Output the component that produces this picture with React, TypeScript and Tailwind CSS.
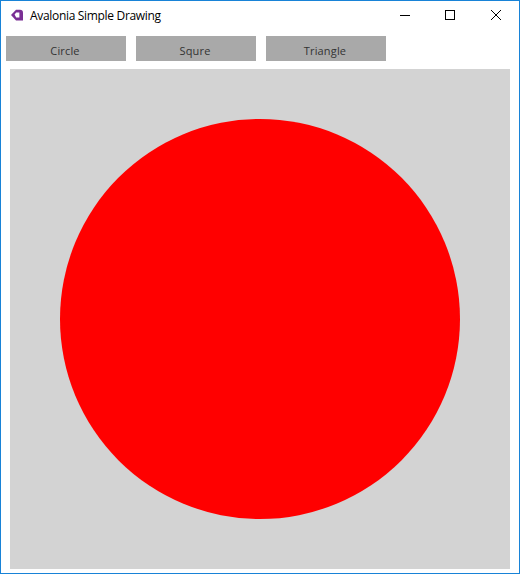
export default function App() {
  const buttons = ["Circle", "Squre", "Triangle"];
  return (
    <div className="w-[520px] h-[574px] bg-white border border-[#1883d7] flex flex-col font-['Open_Sans',sans-serif] overflow-hidden">
      <div className="h-[30px] flex items-center shrink-0">
        <svg width="14" height="14" viewBox="0 0 14 14" className="ml-[9px] mt-[-3px]">
          <path d="M1 7 L6 1.8 H10 Q13 1.8 13 5 V12.5 H6 Z" fill="#7a2f94" />
          <path d="M4.6 6.6 L6.2 4.6 H9.4 V9.6 H6.2 Z" fill="#ffffff" />
        </svg>
        <span className="ml-[6px] text-[12px] text-black mt-[-1px] leading-none tracking-[-0.32px]">Avalonia Simple Drawing</span>
        <div className="ml-auto flex items-center">
          <svg width="12" height="12" viewBox="0 0 12 12" className="mr-[33px] mt-[-2px]">
            <path d="M1 6.5 H11" stroke="#000" strokeWidth="1" />
          </svg>
          <svg width="12" height="12" viewBox="0 0 12 12" className="mr-[34px] mt-[-2px]">
            <rect x="1.5" y="1.5" width="9" height="9" fill="none" stroke="#000" strokeWidth="1" />
          </svg>
          <svg width="12" height="12" viewBox="0 0 12 12" className="mr-[17px] mt-[-2px]">
            <path d="M1 1 L11 11 M11 1 L1 11" stroke="#000" strokeWidth="1" />
          </svg>
        </div>
      </div>
      <div className="flex gap-[10px] pl-[5px] mt-[5px] shrink-0">
        {buttons.map((b) => (
          <div key={b} className="w-[120px] h-[25px] bg-[#a9a9a9] flex items-center justify-center text-[11px] tracking-[0.15px] text-[#333] pt-[5px] pr-[2px]">
            {b}
          </div>
        ))}
      </div>
      <div className="ml-[9px] mt-[8px] w-[500px] h-[500px] bg-[#d3d3d3] flex items-center justify-center shrink-0">
        <div className="w-[400px] h-[400px] rounded-full bg-[#ff0000]" />
      </div>
    </div>
  );
}
